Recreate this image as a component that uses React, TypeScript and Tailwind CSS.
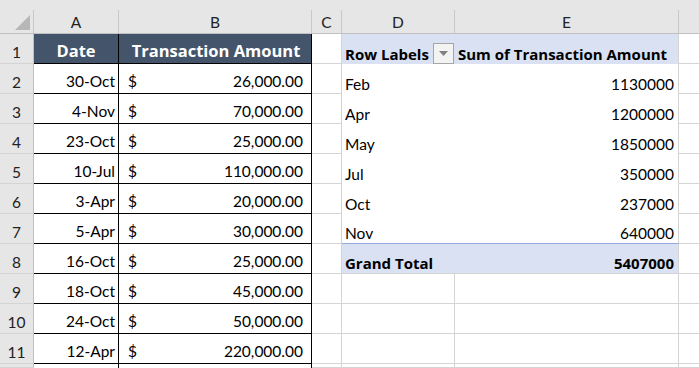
import React from "react";

const G = "border-[#d4d4d4]";
const BOLD = { fontFamily: "'Open Sans', Lato, sans-serif" };

function ColHead({ label, last }: { label: string; last?: boolean }) {
  return (
    <div className="flex flex-col bg-[#e6e6e6] border-b border-[#c0c0c0]">
      <div className="h-[10px]" />
      <div
        className={`flex-1 flex items-center justify-center pt-[1px] text-[#222] ${
          last ? "" : "border-r border-[#c8c8c8]"
        }`}
      >
        {label}
      </div>
    </div>
  );
}

function RowHead({ n }: { n: number | null }) {
  return (
    <div className="flex items-end justify-center pb-[2px] bg-[#e6e6e6] border-r border-b border-r-[#c0c0c0] border-b-[#d4d4d4] text-[#222]">
      {n}
    </div>
  );
}

const data: [string, string][] = [
  ["30-Oct", "26,000.00"],
  ["4-Nov", "70,000.00"],
  ["23-Oct", "25,000.00"],
  ["10-Jul", "110,000.00"],
  ["3-Apr", "20,000.00"],
  ["5-Apr", "30,000.00"],
  ["16-Oct", "25,000.00"],
  ["18-Oct", "45,000.00"],
  ["24-Oct", "50,000.00"],
  ["12-Apr", "220,000.00"],
];

const pivot: [string, string][] = [
  ["Feb", "1130000"],
  ["Apr", "1200000"],
  ["May", "1850000"],
  ["Jul", "350000"],
  ["Oct", "237000"],
  ["Nov", "640000"],
];

export default function App() {
  const rows: React.ReactNode[] = [];

  rows.push(
    <div key="corner" className="flex flex-col bg-[#e6e6e6] border-b border-[#c0c0c0]">
      <div className="h-[10px]" />
      <div className="flex-1 border-r border-[#c8c8c8] relative">
        <svg width="33" height="23" className="absolute left-0 top-0">
          <polygon points="30,5 30,20 15,20" fill="#b7b7b7" />
        </svg>
      </div>
    </div>
  );
  ["A", "B", "C", "D", "E"].forEach((l) => rows.push(<ColHead key={l} label={l} />));
  rows.push(<ColHead key="F" label="" last />);

  for (let r = 1; r <= 12; r++) {
    rows.push(<RowHead key={`rh${r}`} n={r <= 11 ? r : null} />);
    if (r === 1) {
      rows.push(
        <div
          key="a1"
          style={BOLD}
          className="flex items-end justify-center pb-[3px] bg-[#44546a] text-white text-[16.5px] font-bold border-r border-b border-black"
        >
          Date
        </div>
      );
      rows.push(
        <div
          key="b1"
          style={BOLD}
          className="flex items-end justify-center pl-[2px] pb-[3px] bg-[#44546a] text-white text-[16.5px] font-bold border-r border-b border-black"
        >
          Transaction Amount
        </div>
      );
    } else if (r <= 11) {
      const [d, amt] = data[r - 2];
      rows.push(
        <div key={`a${r}`} className="flex items-end justify-end pr-[3px] pb-[3px] bg-white border-r border-b border-black">
          {d}
        </div>
      );
      rows.push(
        <div key={`b${r}`} className="flex items-end justify-between pl-[9px] pr-[8px] pb-[3px] bg-white border-r border-b border-black">
          <span>$</span>
          <span>{amt}</span>
        </div>
      );
    } else {
      rows.push(<div key={`a${r}`} className="bg-white border-r border-black" />);
      rows.push(<div key={`b${r}`} className="bg-white border-r border-black" />);
    }
    rows.push(<div key={`c${r}`} className={`bg-white border-r border-b ${G}`} />);
    if (r === 1) {
      rows.push(
        <div
          key="de1"
          style={BOLD}
          className="col-span-2 flex items-end bg-[#d9e1f2] font-bold text-[15px] border-r border-[#d4d4d4] pb-[1px] pl-[3px]"
        >
          <span className="w-[88px] whitespace-nowrap">Row Labels</span>
          <span className="w-[21px] h-[21px] mb-[-1px] mr-[4px] border border-[#a6a6a6] bg-[#f3f3f3] flex items-center justify-center shrink-0">
            <svg width="9" height="5" viewBox="0 0 9 5">
              <polygon points="0,0 9,0 4.5,5" fill="#808080" />
            </svg>
          </span>
          <span className="whitespace-nowrap">Sum of Transaction Amount</span>
        </div>
      );
    } else if (r <= 7) {
      const [m, v] = pivot[r - 2];
      rows.push(
        <div
          key={`de${r}`}
          className={`col-span-2 flex items-end justify-between pl-[3px] pr-[4px] pb-[1px] bg-white border-r border-r-[#d4d4d4] ${
            r === 7 ? "border-b border-b-[#8ea9db]" : ""
          }`}
        >
          <span>{m}</span>
          <span>{v}</span>
        </div>
      );
    } else if (r === 8) {
      rows.push(
        <div
          key="de8"
          style={BOLD}
          className="col-span-2 flex items-end justify-between pl-[3px] pr-[4px] pb-[1px] bg-[#d9e1f2] font-bold text-[15px] border-r border-b border-[#d4d4d4]"
        >
          <span>Grand Total</span>
          <span>5407000</span>
        </div>
      );
    } else {
      rows.push(<div key={`d${r}`} className={`bg-white border-r border-b ${G}`} />);
      rows.push(<div key={`e${r}`} className={`bg-white border-r border-b ${G}`} />);
    }
    rows.push(<div key={`f${r}`} className={`bg-white border-b ${G}`} />);
  }

  return (
    <div
      className="w-[699px] h-[368px] overflow-hidden bg-white text-[15.5px] leading-[18px] text-black grid grid-cols-[34px_85px_193px_30px_113px_224px_1fr] grid-rows-[34px_repeat(11,30px)_1fr]"
      style={{ fontFamily: "Lato, 'Open Sans', sans-serif" }}
    >
      {rows}
    </div>
  );
}
